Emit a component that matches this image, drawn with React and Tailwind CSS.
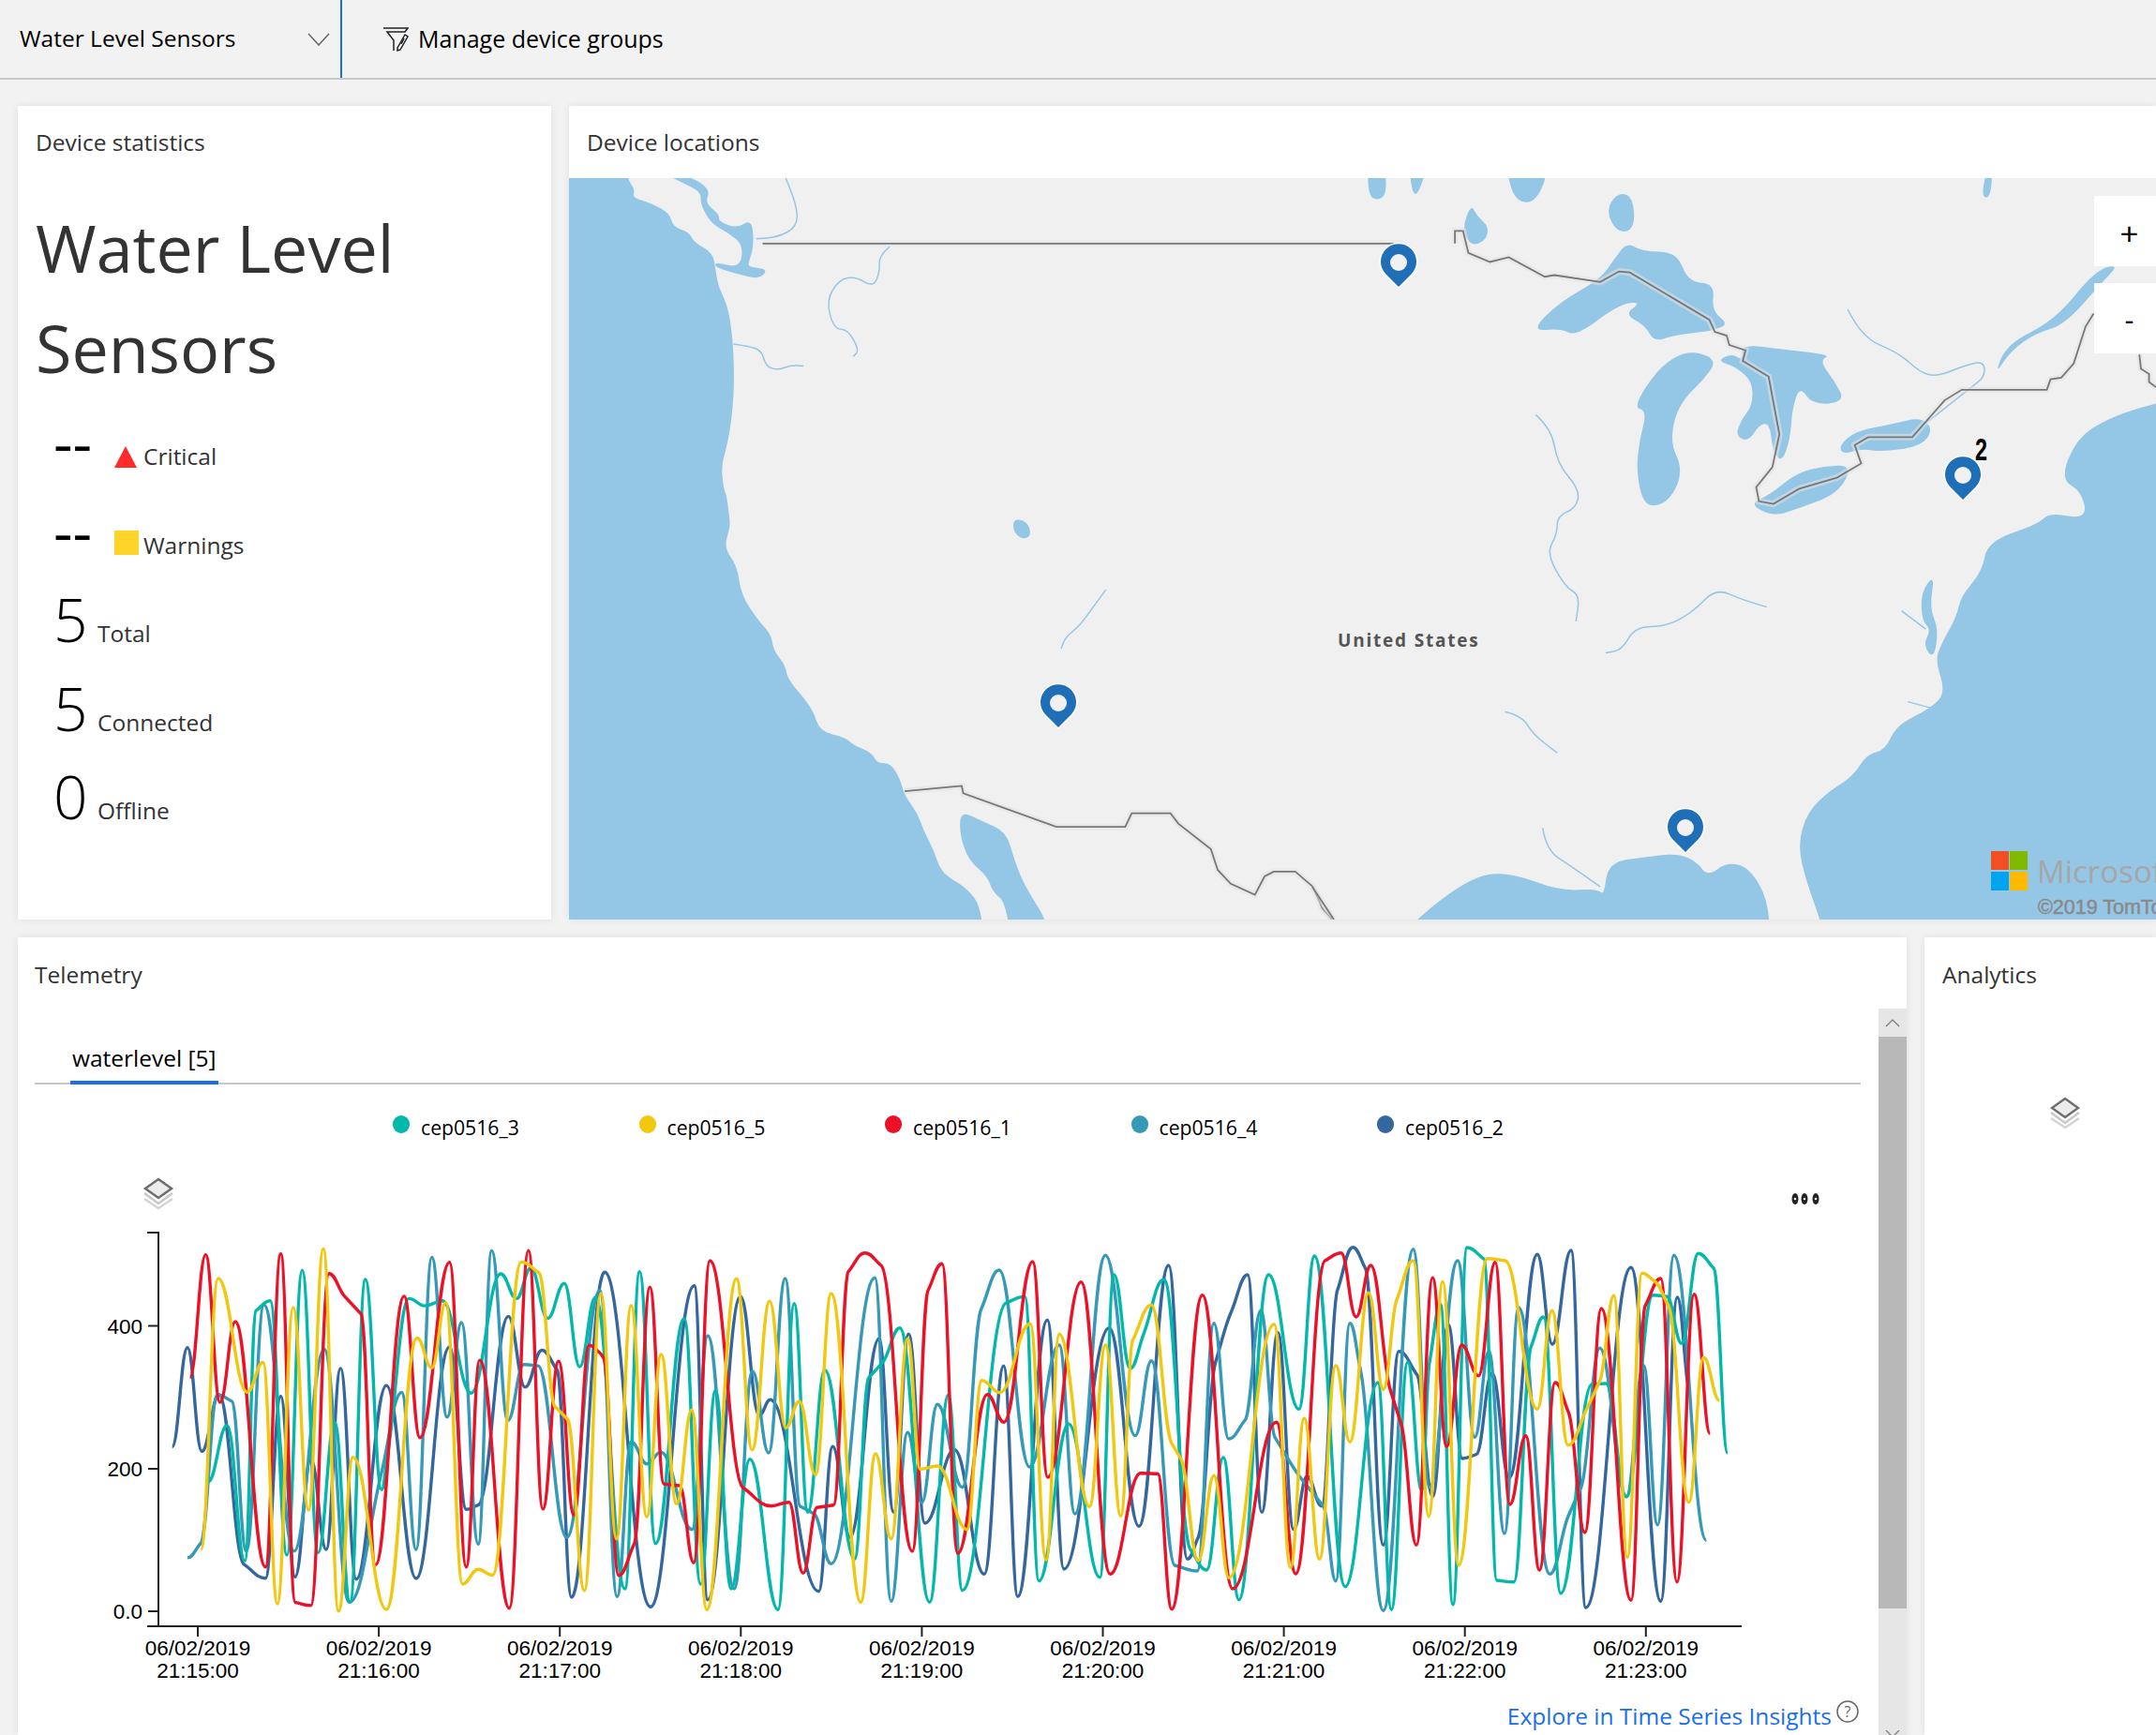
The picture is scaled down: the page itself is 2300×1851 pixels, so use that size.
import React from 'react';

const fromA = ([X, Y]) => [X / 1.96, 1300 + Y / 2.846];
const fromZoom = (ox) => ([X, Y]) => [ox + X / 3, 1320 + Y / 3];

const build = (a, b, c, d) => [
  ...a.map(fromA),
  ...b.map(fromZoom(640)),
  ...c.map(fromZoom(1040)),
  ...d.map(fromZoom(1440)),
];

// traced turning points of each telemetry line
const series = [
  {
    name: 'cep0516_2',
    color: '#34679d',
    points: build(
      [[360,693],[392,392],[422,707],[458,535],[510,1050],[555,1092],[587,540],[617,1088],[650,730],[682,1005],[712,455],[745,1095],[808,507],[870,1093],[940,390],[975,883],[1000,870],[1063,297],[1098,512],[1133,400],[1165,460],[1195,1150]],
      [[15,112],[162,1183],[302,155],[345,1160],[450,190],[510,570],[545,520],[700,1133],[745,670],[800,960],[893,325],[940,880],[988,310],[1040,915],[1135,680]],
      [[30,1078],[92,412],[137,1150],[232,265],[285,1062],[430,290],[525,925],[620,90],[680,1030],[715,960],[770,400],[820,240],[873,120],[918,880],[970,305],[1020,935],[1063,765],[1110,860],[1160,170]],
      [[10,32],[50,100],[107,985],[157,365],[215,440],[265,830],[315,280],[360,708],[405,695],[455,435],[510,770],[600,55],[648,342],[708,42],[755,1185],[900,97],[995,1165],[1048,192],[1090,495]]
    ),
  },
  {
    name: 'cep0516_4',
    color: '#3599b8',
    points: build(
      [[392,1030],[420,985],[455,535],[485,555],[515,1010],[552,262],[615,1010],[678,397],[730,1165],[798,770],[840,528],[870,1005],[903,118],[935,603],[965,316],[1000,988],[1028,98],[1062,613],[1095,443],[1125,447],[1185,968]],
      [[0,170],[55,1150],[100,655],[150,725],[195,688],[295,935],[345,315],[430,1125],[488,428],[540,690],[593,132],[640,860],[685,885],[740,1045],[880,130],[932,1165],[985,625],[1030,850],[1080,535],[1160,800]],
      [[20,230],[78,105],[175,735],[270,345],[320,885],[418,58],[513,635],[565,395],[640,1050],[712,1068],[765,275],[812,645],[865,585],[915,235],[960,640],[1050,780],[1115,860],[1155,1100]],
      [[0,275],[35,430],[107,1195],[203,38],[255,800],[345,75],[400,640],[445,365],[495,948],[540,225],[640,1078],[700,890],[740,800],[800,355],[885,830],[940,410],[985,920],[1037,58],[1141,970]]
    ),
  },
  {
    name: 'cep0516_3',
    color: '#01b8aa',
    points: build(
      [[435,800],[475,628],[512,1040],[535,280],[565,250],[600,1022],[632,157],[665,1015],[700,620],[732,1165],[764,185],[798,823],[810,720],[855,243],[888,265],[925,250],[985,530],[1047,168],[1080,243],[1110,150],[1145,303],[1180,197],[1212,450],[1245,240]],
      [[80,1125],[127,110],[178,980],[270,260],[322,1110],[370,490],[420,1125],[480,710],[570,1192],[622,212],[665,880],[720,425],[815,1030],[860,450],[905,400],[960,290],[1055,1168],[1115,505],[1160,1130]],
      [[100,210],[160,190],[205,1100],[300,598],[400,1088],[445,120],[497,420],[540,310],[605,135],[690,1000],[742,1065],[795,705],[845,1160],[940,120],[1037,550],[1087,60],[1185,1118]],
      [[90,465],[133,1192],[185,400],[230,810],[255,400],[290,215],[330,1175],[375,33],[430,70],[470,1098],[525,1103],[580,350],[620,255],[675,1140],[775,470],[820,468],[885,830],[970,185],[1015,190],[1062,340],[1115,52],[1165,100],[1209,690]]
    ),
  },
  {
    name: 'cep0516_1',
    color: '#ed1127',
    points: build(
      [[397,482],[430,110],[460,558],[492,313],[555,1058],[587,107],[617,1165],[650,1175],[688,167],[720,235],[755,290],[785,1052],[845,236],[878,665],[940,133],[975,1058],[1003,430],[1065,1183],[1105,97],[1135,882],[1168,433],[1200,900],[1232,385]],
      [[0,370],[12,387],[60,1082],[110,980],[160,160],[205,790],[255,795],[300,1042],[352,75],[458,802],[548,860],[605,848],[650,1075],[695,865],[748,857],[795,110],[848,50],[900,90],[1000,1005],[1050,170],[1095,85],[1145,1012]],
      [[40,503],[93,592],[185,78],[233,768],[340,143],[433,1078],[530,755],[585,757],[630,1190],[728,185],[825,1125],[965,592],[1027,1077],[1120,75],[1172,50]],
      [[20,255],[67,90],[130,490],[165,600],[213,985],[265,130],[310,670],[358,345],[412,443],[465,80],[512,855],[563,635],[607,1065],[657,465],[700,560],[752,945],[805,228],[900,1162],[945,220],[995,132],[1047,1103],[1102,182],[1153,628]]
    ),
  },
  {
    name: 'cep0516_5',
    color: '#f2c80f',
    points: build(
      [[420,1005],[456,182],[517,527],[550,437],[580,1170],[613,270],[645,885],[676,92],[708,1192],[738,725],[808,1187],[872,363],[903,453],[932,255],[967,1110],[1000,1065],[1030,1083],[1090,132],[1127,165],[1160,570],[1187,610],[1222,1130]],
      [[3,180],[53,965],[100,218],[150,895],[196,375],[245,853],[294,553],[342,1192],[437,133],[487,680],[543,205],[595,610],[638,525],[690,760],[740,180],[835,1168],[882,693],[932,965],[985,325],[1025,742],[1080,732],[1175,935]],
      [[22,458],[80,497],[177,277],[228,1033],[270,310],[367,862],[418,345],[467,892],[505,330],[565,217],[630,660],[660,710],[715,1035],[765,763],[813,1090],[958,278],[1010,1057],[1054,580],[1103,1030],[1155,410]],
      [[0,655],[60,178],[107,487],[150,200],[203,75],[253,893],[297,142],[348,1050],[440,68],[497,75],[600,550],[647,235],[698,665],[760,545],[800,460],[845,187],[888,1025],[935,115],[975,140],[1020,220],[1085,848],[1132,385],[1183,522]]
    ),
  },
];

const legend = [
  { name: 'cep0516_3', color: 'bg-[#01b8aa]' },
  { name: 'cep0516_5', color: 'bg-[#f2c80f]' },
  { name: 'cep0516_1', color: 'bg-[#ed1127]' },
  { name: 'cep0516_4', color: 'bg-[#3599b8]' },
  { name: 'cep0516_2', color: 'bg-[#34679d]' },
];

const xTicks = ['21:15:00', '21:16:00', '21:17:00', '21:18:00', '21:19:00', '21:20:00', '21:21:00', '21:22:00', '21:23:00'];

const linePath = (pts) => {
  const slopes = pts.map((p, i) => {
    if (i === 0 || i === pts.length - 1) return 0;
    const s0 = (p[1] - pts[i - 1][1]) / (p[0] - pts[i - 1][0]);
    const s1 = (pts[i + 1][1] - p[1]) / (pts[i + 1][0] - p[0]);
    if (s0 * s1 <= 0) return 0;
    return Math.sign(s0) * Math.min(Math.abs(s0), Math.abs(s1));
  });
  let d = `M${pts[0][0].toFixed(1)} ${pts[0][1].toFixed(1)}`;
  for (let i = 1; i < pts.length; i++) {
    const [x0, y0] = pts[i - 1];
    const [x1, y1] = pts[i];
    const h = (x1 - x0) * 0.42;
    d += `C${(x0 + h).toFixed(1)} ${(y0 + slopes[i - 1] * h).toFixed(1)} ${(x1 - h).toFixed(1)} ${(y1 - slopes[i] * h).toFixed(1)} ${x1.toFixed(1)} ${y1.toFixed(1)}`;
  }
  return d;
};

const mid = (a, b) => [(a[0] + b[0]) / 2, (a[1] + b[1]) / 2];

// rounded outline for lakes and coasts
const poly = (pts) => {
  const n = pts.length;
  const start = mid(pts[n - 1], pts[0]);
  let d = `M${start[0]} ${start[1]}`;
  pts.forEach((p, i) => {
    const m = mid(p, pts[(i + 1) % n]);
    d += `Q${p[0]} ${p[1]} ${m[0]} ${m[1]}`;
  });
  return d + 'Z';
};

const river = (pts) => {
  let d = `M${pts[0][0]} ${pts[0][1]}`;
  for (let i = 1; i < pts.length - 1; i++) {
    const m = mid(pts[i], pts[i + 1]);
    d += `Q${pts[i][0]} ${pts[i][1]} ${m[0]} ${m[1]}`;
  }
  const last = pts[pts.length - 1];
  return d + `L${last[0]} ${last[1]}`;
};

const open = (pts) => 'M' + pts.map((p) => p.join(' ')).join('L');

// map shapes, in the coordinates of the west and east crops
const westWater = [
  [[-100,60],[-90,60],[110,60],[118,100],[120,143],[135,165],[130,180],[165,190],[200,210],[205,235],[235,245],[245,265],[280,285],[285,320],[290,350],[305,380],[315,430],[320,520],[315,600],[305,655],[295,690],[300,735],[305,745],[310,785],[312,805],[300,845],[325,880],[332,935],[365,985],[388,1010],[392,1040],[415,1070],[418,1095],[465,1150],[478,1195],[525,1205],[540,1220],[575,1235],[585,1255],[610,1255],[628,1285],[635,1315],[660,1350],[672,1385],[690,1420],[705,1465],[750,1490],[780,1530],[785,1650],[700,1650],[-90,1650],[-100,1650],[-100,1640]],
  [[160,120],[240,140],[275,165],[265,190],[292,212],[290,225],[325,238],[352,220],[356,270],[347,300],[345,312],[382,315],[368,334],[335,328],[283,312],[285,302],[330,314],[336,270],[310,248],[275,228],[256,190],[258,170],[225,152]],
  [[740,1345],[780,1365],[825,1385],[840,1440],[860,1490],[910,1570],[880,1650],[840,1650],[825,1520],[800,1500],[790,1470],[755,1440],[738,1390]],
  [[838,790],[864,795],[872,822],[855,830],[838,815]],
];
const westRivers = [
  [[318,458],[345,462],[370,470],[378,500],[400,508],[425,498],[448,500]],
  [[608,273],[588,290],[590,320],[578,350],[545,330],[515,335],[490,375],[505,430],[530,430],[552,470],[540,482]],
  [[415,143],[435,190],[437,235],[400,255],[360,258]],
  [[1010,925],[985,960],[960,995],[935,1015],[927,1037]],
];
const westBorders = [
  [[372,267],[1560,267]],
  [[636,1308],[742,1298],[745,1312],[918,1376],[1046,1376],[1058,1350],[1130,1350],[1145,1370],[1205,1418],[1218,1458],[1242,1484],[1287,1505],[1305,1470],[1322,1461],[1362,1461],[1395,1490],[1412,1530],[1430,1552]],
];
const eastWater = [
  [[103,110],[135,120],[138,170],[125,185],[104,178]],
  [[180,110],[214,120],[195,178],[184,165]],
  [[360,120],[440,125],[420,180],[395,192],[372,175]],
  [[278,240],[295,192],[306,215],[328,235],[322,262],[295,272]],
  [[1243,178],[1255,120],[1264,130],[1260,180]],
  [[546,205],[565,172],[592,174],[600,215],[592,244],[565,244]],
  [[405,434],[460,378],[535,335],[560,298],[585,264],[612,282],[678,283],[698,340],[748,343],[742,395],[774,420],[745,432],[730,434],[670,442],[635,454],[618,422],[580,402],[612,378],[570,382],[490,444],[462,428]],
  [[596,578],[640,508],[680,478],[716,472],[752,490],[728,525],[692,560],[672,600],[667,650],[686,690],[678,732],[652,764],[616,766],[602,700],[608,640],[622,585]],
  [[752,490],[780,476],[800,490],[798,458],[870,468],[965,478],[942,490],[972,530],[990,568],[930,574],[906,538],[892,580],[888,640],[872,684],[855,658],[850,608],[830,612],[810,644],[786,632],[798,600],[818,575],[818,530],[788,502]],
  [[812,762],[850,745],[900,703],[950,690],[1004,688],[978,742],[900,772],[855,786]],
  [[978,652],[1010,623],[1080,610],[1130,597],[1154,620],[1132,652],[1060,663],[1020,657],[988,668]],
  [[1268,518],[1290,458],[1380,413],[1455,318],[1500,306],[1467,342],[1397,422],[1345,437],[1297,472]],
  [[1700,540],[1568,570],[1480,598],[1420,638],[1390,715],[1430,738],[1440,792],[1370,778],[1350,800],[1255,833],[1245,890],[1205,938],[1198,975],[1168,1030],[1158,1060],[1177,1120],[1150,1150],[1085,1183],[1065,1230],[1030,1238],[1005,1280],[960,1308],[920,1348],[902,1410],[918,1480],[950,1570],[960,1650],[1690,1650],[1700,1650],[1700,1640]],
  [[1157,895],[1131,930],[1133,985],[1150,1000],[1135,1030],[1155,1058],[1164,1000],[1147,960]],
  [[120,1640],[190,1552],[300,1468],[370,1463],[460,1498],[530,1493],[542,1507],[550,1443],[620,1433],[680,1426],[715,1443],[735,1470],[770,1443],[812,1453],[850,1520],[850,1640]],
];
const eastRivers = [
  [[415,592],[445,620],[455,685],[497,735],[490,770],[455,785],[455,820],[435,855],[470,920],[497,935],[490,985]],
  [[845,958],[800,945],[750,922],[710,965],[660,995],[600,995],[575,1040],[545,1045]],
  [[358,1157],[390,1165],[410,1200],[455,1235]],
  [[428,1378],[435,1420],[480,1450],[535,1490]],
  [[995,392],[1020,445],[1090,475],[1130,512],[1160,520],[1210,500],[1248,490],[1250,520],[1225,540],[1120,625]],
  [[1107,1138],[1150,1150]],
  [[1095,965],[1140,1000]],
];
const eastBorders = [
  [[265,267],[265,243],[280,243],[290,285],[330,302],[365,293],[432,330],[450,327],[535,340],[570,320],[590,322],[738,412],[748,435],[770,442],[775,460],[805,470],[800,490],[848,520],[868,630],[855,692],[825,730],[830,757],[857,762],[905,733],[975,712],[1020,685],[1008,650],[1033,635],[1115,635],[1175,565],[1207,545],[1365,545],[1372,525],[1392,522],[1415,495],[1437,425],[1452,400]],
  [[1537,478],[1540,505],[1555,515],[1555,530],[1568,540]],
  [[0,1490],[40,1552]],
];

const MapLayer = ({ water, rivers, borders, transform }) => (
  <g transform={transform}>
    {water.map((p, i) => (
      <path key={i} d={poly(p)} fill="#94c6e6" />
    ))}
    {rivers.map((p, i) => (
      <path key={i} d={river(p)} fill="none" stroke="#94c6e6" strokeWidth="1.5" vectorEffect="non-scaling-stroke" />
    ))}
    {borders.map((p, i) => (
      <path key={i} d={open(p)} fill="none" stroke="#e4e4e4" strokeOpacity="0.55" strokeWidth="7" vectorEffect="non-scaling-stroke" />
    ))}
    {borders.map((p, i) => (
      <path key={i} d={open(p)} fill="none" stroke="#777777" strokeWidth="1.8" vectorEffect="non-scaling-stroke" />
    ))}
  </g>
);

const Pin = ({ x, y }) => (
  <g transform={`translate(${x} ${y})`}>
    <path d="M0 26L-14 12A19 19 0 1 1 14 12Z" fill="#1f6fb8" stroke="#ffffff" strokeWidth="3" strokeLinejoin="round" paintOrder="stroke" />
    <circle r="9" fill="#f1f1f1" />
  </g>
);

const UsMap = () => (
  <svg viewBox="607 190 1693 791" className="block w-[1693px] h-[791px] bg-[#f0f0f0]">
    <MapLayer water={westWater} rivers={westRivers} borders={westBorders} transform="translate(600 110) scale(0.574 0.5612)" />
    <MapLayer water={eastWater} rivers={eastRivers} borders={eastBorders} transform="translate(1400 110) scale(0.574 0.5612)" />
    <Pin x={1492} y={280} />
    <Pin x={1129} y={750} />
    <Pin x={2094} y={507} />
    <Pin x={1798} y={883} />
    <text x="2107" y="491" fontSize="34" fontWeight="700" fontFamily="Liberation Sans, sans-serif" fill="#000000" textLength="13" lengthAdjust="spacingAndGlyphs">2</text>
    <text x="1427" y="690" fontSize="19" fontWeight="700" letterSpacing="1.8" fontFamily="Open Sans, sans-serif" fill="#555555">United States</text>
    <rect x="2124" y="908" width="19" height="20" fill="#f25022" />
    <rect x="2144" y="908" width="19" height="20" fill="#7fba00" />
    <rect x="2124" y="930" width="19" height="20" fill="#00a4ef" />
    <rect x="2144" y="930" width="19" height="20" fill="#ffb900" />
    <text x="2173" y="942" fontSize="33" fontFamily="Open Sans, sans-serif" fill="#a6a6a6">Microsoft</text>
    <text x="2174" y="975" fontSize="21.5" fontFamily="Liberation Sans, sans-serif" fill="#8a8a8a" stroke="#8a8a8a" strokeWidth="0.5">©2019 TomTom</text>
  </svg>
);

const LayersIcon = ({ x, y }) => (
  <g transform={`translate(${x} ${y})`} fill="none" strokeWidth="2.5">
    <path d="M16 2L30 12L16 22L2 12Z" stroke="#6e6e6e" fill="#ececec" />
    <path d="M1 17L16 28L31 17" stroke="#c8c8c8" />
    <path d="M1 23L16 33L31 23" stroke="#d4d4d4" />
  </g>
);

const TelemetryChart = () => (
  <svg viewBox="19 1249 1985 550" className="block w-[1985px] h-[550px]">
    <LayersIcon x={153} y={1256} />
    <g fill="#222222">
      <ellipse cx="1915" cy="1279" rx="3.5" ry="6" />
      <ellipse cx="1925" cy="1279" rx="3.5" ry="6" />
      <ellipse cx="1937" cy="1279" rx="3.5" ry="6" />
    </g>
    <g fill="#ffffff">
      <circle cx="1915" cy="1279" r="1.3" />
      <circle cx="1925" cy="1279" r="1.3" />
      <circle cx="1937" cy="1279" r="1.3" />
    </g>
    <path d="M157 1315H169V1735M157 1735H1858" fill="none" stroke="#222222" strokeWidth="2" />
    <path d="M158 1414.5H169M158 1567H169M158 1719H169" fill="none" stroke="#222222" strokeWidth="2" />
    {[['400', 1414.5], ['200', 1567], ['0.0', 1719]].map(([label, y]) => (
      <text key={label} x="152" y={y + 8} textAnchor="end" fontSize="22.5" fontFamily="Liberation Sans, sans-serif" fill="#000000">{label}</text>
    ))}
    {xTicks.map((t, i) => {
      const x = 211 + i * 193.1;
      return (
        <g key={t}>
          <path d={`M${x} 1735V1746`} stroke="#222222" strokeWidth="2" />
          <text x={x} y="1766" textAnchor="middle" fontSize="22.5" fontFamily="Liberation Sans, sans-serif" fill="#000000">06/02/2019</text>
          <text x={x} y="1790" textAnchor="middle" fontSize="22.5" fontFamily="Liberation Sans, sans-serif" fill="#000000">{t}</text>
        </g>
      );
    })}
    {series.map((s) => (
      <path key={s.name} d={linePath(s.points)} fill="none" stroke={s.color} strokeWidth="3.4" strokeLinejoin="round" />
    ))}
  </svg>
);

const Stat = ({ value, label, marker, dashed }) => (
  <div className="flex items-baseline h-[94.5px] pl-[38px]">
    <span className={`w-[47px] text-[64px] leading-none text-black ${dashed ? 'font-normal' : 'font-light'}`}>{value}</span>
    {marker}
    <span className="text-[24.5px] text-[#333333]">{label}</span>
  </div>
);

export default function App() {
  return (
    <div className="w-[2300px] h-[1851px] overflow-hidden bg-[#f2f2f2] text-[24.5px] text-[#333333] font-['Open_Sans',sans-serif]">
      <header className="flex h-[85px] items-stretch border-b-2 border-[#c8c8c8] text-black">
        <div className="flex w-[365px] items-center justify-between border-r-2 border-[#1a6fe8] pl-[21px] pr-[11px]">
          <span>Water Level Sensors</span>
          <svg width="24" height="14" viewBox="0 0 24 14" fill="none" stroke="#666666" strokeWidth="1.5">
            <path d="M1 1L12 13L23 1" />
          </svg>
        </div>
        <div className="flex items-center gap-[10px] pl-[43px]">
          <svg width="28" height="26" viewBox="0 0 28 26" fill="none" stroke="#222222" strokeWidth="1.5">
            <path d="M1 1H27L24 5H5L12 14V25" />
            <path d="M16 22L24 8L27 10L19 24L16 25Z" />
            <path d="M20 18L23 12" />
          </svg>
          <span className="text-[25px]">Manage device groups</span>
        </div>
      </header>

      <div className="grid grid-cols-[569px_1fr] gap-[19px] pl-[19px] pt-[28px]">
        <section className="h-[868px] bg-white shadow-[0_0_8px_rgba(0,0,0,0.08)]">
          <h2 className="pl-[19px] pt-[21px] leading-[36px] font-normal">Device statistics</h2>
          <h1 className="mt-[41px] pl-[19px] text-[70px] leading-[107px] font-normal text-[#333333]">Water Level Sensors</h1>
          <div className="mt-[15px]">
            <Stat
              dashed
              value="--"
              label="Critical"
              marker={
                <svg width="24" height="23" viewBox="0 0 24 23" className="ml-[18px] mr-[7px] self-center">
                  <path d="M12 0L24 23H0Z" fill="#ff2a2a" />
                </svg>
              }
            />
            <Stat
              dashed
              value="--"
              label="Warnings"
              marker={<span className="ml-[18px] mr-[5px] h-[26px] w-[26px] -translate-y-[3px] self-center bg-[#ffd42a]" />}
            />
            <Stat value="5" label="Total" />
            <Stat value="5" label="Connected" />
            <Stat value="0" label="Offline" />
          </div>
        </section>

        <section className="relative h-[868px] bg-white shadow-[0_0_8px_rgba(0,0,0,0.08)]">
          <h2 className="h-[77px] pl-[19px] pt-[21px] leading-[36px] font-normal">Device locations</h2>
          <UsMap />
          <div className="absolute right-0 top-[96px] flex h-[75px] w-[66px] items-center justify-center bg-white pl-[9px] pt-[5px] text-[34px] text-black font-['Liberation_Sans',sans-serif]">+</div>
          <div className="absolute right-0 top-[189px] flex h-[75px] w-[66px] items-center justify-center bg-white pl-[9px] pt-[3px] text-[30px] text-black font-['Liberation_Sans',sans-serif]">-</div>
        </section>
      </div>

      <div className="mt-[19px] grid grid-cols-[2015px_1fr] gap-[19px] pl-[19px]">
        <section className="h-[851px] bg-white shadow-[0_0_8px_rgba(0,0,0,0.08)]">
          <h2 className="h-[76px] pl-[18px] pt-[22px] leading-[36px] font-normal">Telemetry</h2>
          <div className="flex">
            <div className="w-[1985px]">
              <div className="ml-[18px] h-[81px] w-[1948px] border-b-2 border-[#c8c8c8] flex items-end pl-[38px]">
                <span className="h-[43px] w-[158px] border-b-4 border-[#1a6fe8] pl-[2px] leading-[30px] text-black -mb-[2px] whitespace-nowrap">waterlevel [5]</span>
              </div>
              <div className="flex h-[92px] items-center pl-[400px]">
                {legend.map((item) => (
                  <div key={item.name} className="flex w-[262.5px] items-center gap-[12px]">
                    <span className={`h-[19px] w-[18px] rounded-full -translate-y-[3px] ${item.color}`} />
                    <span className="text-[21.2px] text-black">{item.name}</span>
                  </div>
                ))}
              </div>
              <TelemetryChart />
              <div className="flex h-[52px] items-start justify-end pr-[21px] text-[#1a6fe8]">
                <span className="mt-[14px] leading-[36px]">Explore in Time Series Insights</span>
                <svg width="24" height="24" viewBox="0 0 24 24" fill="none" className="mt-[15px] ml-[5px]">
                  <circle cx="12" cy="12" r="11" stroke="#666666" strokeWidth="1.5" />
                  <text x="12" y="18" textAnchor="middle" fontSize="16" fontFamily="Open Sans, sans-serif" fill="#666666">?</text>
                </svg>
              </div>
            </div>
            <div className="flex h-[775px] w-[30px] flex-col bg-[#e6e6e6]">
              <div className="flex h-[30px] items-center justify-center">
                <svg width="16" height="9" viewBox="0 0 16 9" fill="none" stroke="#777777" strokeWidth="1.2">
                  <path d="M1 8L8 1L15 8" />
                </svg>
              </div>
              <div className="h-[610px] bg-[#b8b8b8]" />
              <div className="flex flex-1 items-end justify-center">
                <svg width="16" height="5" viewBox="0 0 16 5" fill="none" stroke="#777777" strokeWidth="1.2">
                  <path d="M1 0L8 7L15 0" />
                </svg>
              </div>
            </div>
          </div>
        </section>

        <section className="relative h-[851px] bg-white shadow-[0_0_8px_rgba(0,0,0,0.08)]">
          <h2 className="h-[76px] pl-[19px] pt-[22px] leading-[36px] font-normal">Analytics</h2>
          <div className="flex justify-center pl-[53px] pt-[94px]">
            <svg width="32" height="35" viewBox="0 0 32 35">
              <LayersIcon x={0} y={0} />
            </svg>
          </div>
        </section>
      </div>
    </div>
  );
}
